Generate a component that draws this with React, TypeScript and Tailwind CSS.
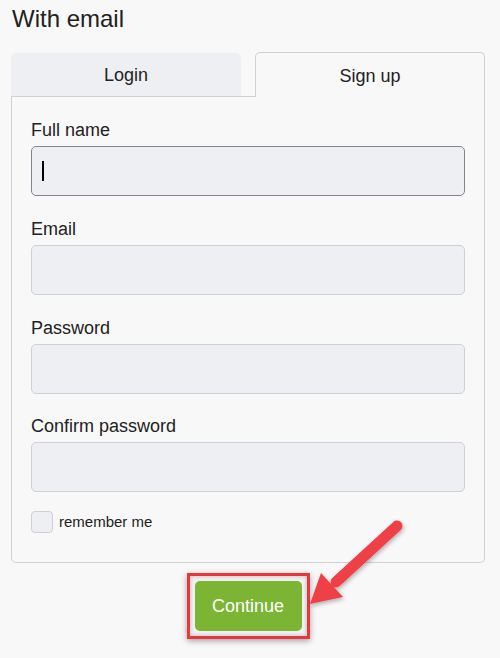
import React from 'react';

const fields = [
  { label: 'Full name', focused: true },
  { label: 'Email', focused: false },
  { label: 'Password', focused: false },
  { label: 'Confirm password', focused: false },
];

export default function App() {
  return (
    <div className="relative w-[500px] h-[658px] overflow-hidden bg-[#f8f8f8] pl-[11px] pr-[15px] font-['Liberation_Sans',Arial,sans-serif] text-[#222]">
      <h1 className="pt-[5px] text-[24px] leading-[28px] pl-[1px]">With email</h1>

      <div className="mt-[19px] flex items-end">
        <div className="w-[244px] border-b border-[#cfd0d8]">
          <div className="flex h-[43px] w-[230px] items-center justify-center rounded-t-[5px] bg-[#eeeff2] text-[18px] leading-[22px]">
            Login
          </div>
        </div>
        <div className="flex h-[45px] w-[230px] items-center justify-center rounded-t-[5px] border border-b-0 border-[#cfd0d8] pt-[2px] text-[18px] leading-[22px]">
          Sign up
        </div>
      </div>

      <div className="w-[474px] rounded-b-[5px] border border-t-0 border-[#cfd0d8] px-[19px] pt-[22px] pb-[29px]">
        <div className="flex flex-col gap-[22px]">
          {fields.map((f, i) => (
            <div key={f.label} className={i === 3 ? '-mt-[1px]' : ''}>
              <div className="mb-[5px] text-[18px] leading-[22px]">{f.label}</div>
              <div
                className={
                  f.focused
                    ? 'flex h-[50px] items-center rounded-[5px] border border-[#80848c] bg-[#eeeff2] px-[10px]'
                    : 'flex h-[50px] items-center rounded-[5px] border border-[#cdd0d6] bg-[#eeeff2] px-[10px]'
                }
              >
                {f.focused && <span className="block h-[20px] w-[2px] bg-black" />}
              </div>
            </div>
          ))}
        </div>
        <div className="mt-[19px] flex items-center gap-[6px]">
          <span className="block h-[22px] w-[22px] rounded-[4px] border border-[#cdd0d6] bg-[#eeeff2]" />
          <span className="text-[15px] leading-[18px]">remember me</span>
        </div>
      </div>

      <div className="mt-[10px] flex w-[474px] justify-center">
        <div className="border-[3px] border-[#e8363d] p-[5px] shadow-[0_2px_6px_rgba(0,0,0,0.35),inset_0_0_4px_rgba(0,0,0,0.25)] bg-[#f2f2f2]">
          <button className="h-[50px] w-[107px] rounded-[5px] bg-[#7bb533] text-[18px] leading-[22px] text-white">
            Continue
          </button>
        </div>
      </div>

      <svg
        className="absolute left-0 top-0 pointer-events-none"
        width="500"
        height="658"
        viewBox="0 0 500 658"
      >
        <defs>
          <filter id="sh" x="-20%" y="-20%" width="140%" height="140%">
            <feDropShadow dx="1" dy="2" stdDeviation="2" floodColor="#000" floodOpacity="0.3" />
          </filter>
        </defs>
        <g filter="url(#sh)">
          <line x1="397" y1="526" x2="336" y2="582" stroke="#ef4047" strokeWidth="11" strokeLinecap="round" />
          <polygon points="310,604 321,573 343,597" fill="#ef4047" />
        </g>
      </svg>
    </div>
  );
}
